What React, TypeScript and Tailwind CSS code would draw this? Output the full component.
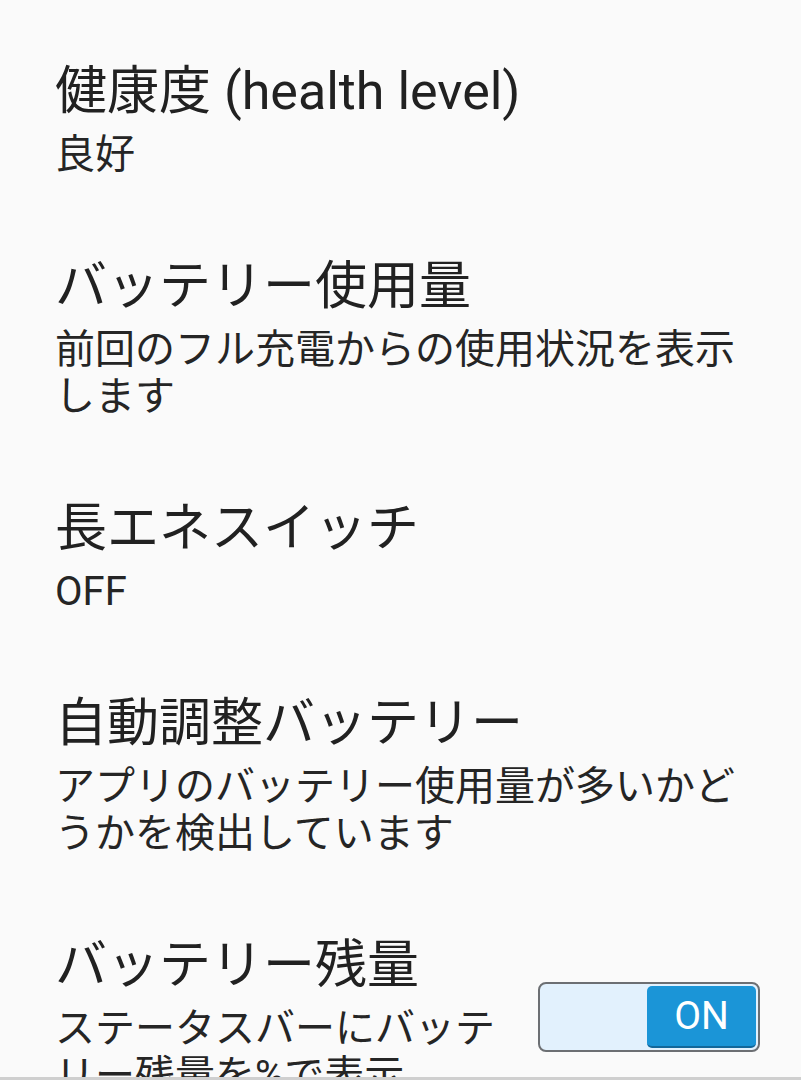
import React from "react";

const font = { fontFamily: "Roboto, 'Noto Sans CJK JP', sans-serif" };

function Item({ title, sub }: { title: string; sub: string }) {
  return (
    <div className="py-[39px] pl-[55px] pr-[55px]">
      <div className="text-[52px] leading-[62px] text-[#212121]">{title}</div>
      <div className="mt-[8px] text-[40px] leading-[47px] text-[#252525]">{sub}</div>
    </div>
  );
}

export default function App() {
  return (
    <div className="w-[801px] h-[1080px] bg-[#fafafa] flex flex-col overflow-hidden" style={font}>
      <div className="h-[1077px] overflow-hidden pt-[22px]">
        <Item title="健康度 (health level)" sub="良好" />
        <Item title="バッテリー使用量" sub="前回のフル充電からの使用状況を表示します" />
        <Item title="長エネスイッチ" sub="OFF" />
        <Item title="自動調整バッテリー" sub="アプリのバッテリー使用量が多いかどうかを検出しています" />
        <div className="py-[39px] pl-[55px] pr-[41px] flex items-center gap-[20px]">
          <div className="flex-1">
            <div className="text-[52px] leading-[62px] text-[#212121]">バッテリー残量</div>
            <div className="mt-[8px] text-[40px] leading-[47px] text-[#252525]">
              ステータスバーにバッテリー残量を%で表示
            </div>
          </div>
          <div className="w-[222px] h-[70px] rounded-[8px] border-2 border-[#6c6f73] bg-[#e2f1fd] flex items-center justify-end p-[2px] shrink-0">
            <div className="w-[109px] h-[62px] rounded-[5px] bg-[#1b95d7] border-b-2 border-[#12679a] flex items-center justify-center text-white text-[39px] leading-none">
              ON
            </div>
          </div>
        </div>
      </div>
      <div className="h-[3px] bg-[#cfcfcf]" />
    </div>
  );
}
